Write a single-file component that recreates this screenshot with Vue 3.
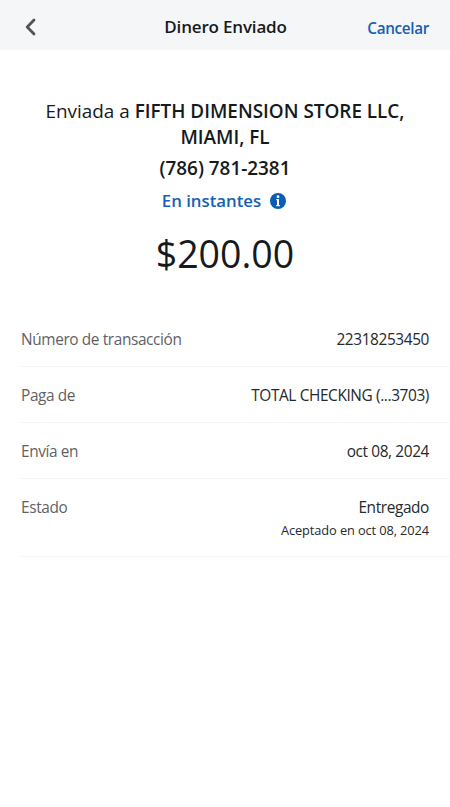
<template>
  <div class="screen">
    <header class="topbar">
      <button class="back-btn" type="button" aria-label="Atrás">
        <svg viewBox="0 0 12 18" width="12" height="18" aria-hidden="true">
          <path d="M10 2 3.200 9l6.800 7" />
        </svg>
      </button>
      <h1 class="topbar-title">Dinero Enviado</h1>
      <button class="cancel-btn" type="button">Cancelar</button>
    </header>

    <main>
      <section class="summary">
        <p class="recipient">
          Enviada a <strong>FIFTH DIMENSION STORE LLC,<br />MIAMI, FL</strong>
        </p>
        <p class="phone">(786) 781-2381</p>
        <p class="speed">
          <span>En instantes</span>
          <svg class="info-icon" viewBox="0 0 16 16" width="16" height="16" aria-hidden="true">
            <circle cx="8" cy="8" r="8" fill="#0b5cb5" />
            <circle cx="8" cy="3.700" r="1.400" fill="#fff" />
            <path d="M6.200 6H9v6h.8v1.200H6.200V12H7V7.200h-.8z" fill="#fff" />
          </svg>
        </p>
        <p class="amount">$200.00</p>
      </section>

      <dl class="details">
        <div v-for="row in rows" :key="row.label" class="row">
          <dt>{{ row.label }}</dt>
          <dd>
            {{ row.value }}
            <small v-if="row.note">{{ row.note }}</small>
          </dd>
        </div>
      </dl>
    </main>
  </div>
</template>

<script setup>
const rows = [
  { label: 'Número de transacción', value: '22318253450' },
  { label: 'Paga de', value: 'TOTAL CHECKING (...3703)' },
  { label: 'Envía en', value: 'oct 08, 2024' },
  { label: 'Estado', value: 'Entregado', note: 'Aceptado en oct 08, 2024' },
]
</script>

<style>
body { background: #fff; }
</style>

<style scoped>
.screen {
  min-height: 807px; background: #fff; color: #151a20;
  font-family: "Open Sans", "Noto Sans", sans-serif;
}
p, h1, dl, dd { margin: 0; }
button { border: none; background: none; padding: 0; font-family: inherit; cursor: pointer; }

/* ── Header ── */
.topbar {
  height: 50px; box-sizing: border-box; padding: 4px 21px 0 22px;
  display: grid; grid-template-columns: 1fr auto 1fr; align-items: center;
  background: #f5f6f8;
}
.back-btn { justify-self: start; display: flex; margin-left: 2px; }
.back-btn path { fill: none; stroke: #505458; stroke-width: 2.800; stroke-linecap: round; stroke-linejoin: round; }
.topbar-title { font-size: 17px; line-height: 24px; font-weight: 600; letter-spacing: -.18px; }
.cancel-btn {
  justify-self: end; padding-top: 1px; color: #1661b3;
  font-size: 15.300px; font-weight: 600; line-height: 24px; letter-spacing: -.35px;
}

/* ── Summary ── */
.summary { padding-top: 48px; text-align: center; }
.recipient { font-size: 18.900px; line-height: 26px; }
.recipient strong { font-weight: 600; }
.phone { margin-top: 5px; font-size: 18.900px; line-height: 26px; font-weight: 600; }
.speed {
  display: flex; align-items: center; justify-content: center; gap: 9px;
  margin-top: 8px; padding-right: 2px; color: #1661b3;
  font-size: 16.800px; line-height: 24px; font-weight: 600;
}
.amount { margin-top: 15px; font-size: 37.500px; line-height: 52px; }

/* ── Details ── */
.details { margin-top: 31px; padding-left: 21px; }
.row {
  display: flex; justify-content: space-between;
  padding: 17px 21px 14px 0; border-bottom: 1px solid #f3f4f4;
  font-size: 15.400px; line-height: 24px; letter-spacing: -.38px;
}
.row dt { color: #5f6265; }
.row dd { text-align: right; color: #25292d; }
.row small { display: block; padding-bottom: 1px; font-size: 12.800px; line-height: 21px; letter-spacing: -.1px; }
</style>
